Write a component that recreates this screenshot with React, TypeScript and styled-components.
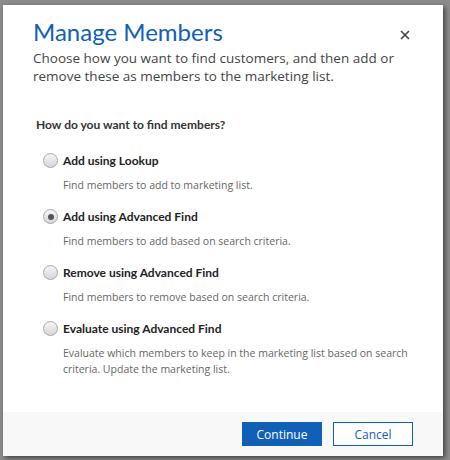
import styled, { createGlobalStyle } from "styled-components";

const GlobalStyle = createGlobalStyle`
  html, body {
    margin: 0;
    padding: 0;
    background: #8c8c8c;
  }
  body {
    font-family: "Open Sans", "Noto Sans", sans-serif;
  }
  * {
    box-sizing: border-box;
  }
`;

const Page = styled.div`
  width: 450px;
  height: 460px;
  padding: 5px 7px 4px 3px;
`;

const Dialog = styled.div`
  width: 440px;
  height: 451px;
  background: #fff;
  display: flex;
  flex-direction: column;
  box-shadow: 2px 2px 5px rgba(0, 0, 0, 0.55);
`;

const Header = styled.div`
  display: flex;
  align-items: flex-start;
  padding: 10px 30px 0 30px;
`;

const HeaderText = styled.div`
  flex: 1;
`;

const Title = styled.h1`
  margin: 0;
  font-family: Lato, "Open Sans", sans-serif;
  font-size: 24px;
  font-weight: 400;
  color: #1160b7;
  line-height: 34px;
`;

const Subtitle = styled.p`
  margin: 0;
  font-size: 13.5px;
  line-height: 18px;
  color: #444;
`;

const Close = styled.button`
  border: none;
  background: none;
  padding: 0;
  margin: 10px -2px 0 0;
  width: 20px;
  height: 20px;
  display: flex;
  align-items: center;
  justify-content: center;
  cursor: pointer;
`;

const Body = styled.div`
  flex: 1;
  padding: 32px 33px 0 33px;
`;

const Question = styled.div`
  font-family: Lato, "Open Sans", sans-serif;
  font-size: 12px;
  font-weight: 700;
  color: #333;
  margin-bottom: 21px;
`;

const Options = styled.div`
  display: flex;
  flex-direction: column;
  gap: 16px;
  padding-left: 7px;
`;

const Option = styled.label`
  display: grid;
  grid-template-columns: 16px 1fr;
  column-gap: 4px;
  row-gap: 9px;
  align-items: center;
`;

const Radio = styled.span<{ $checked?: boolean }>`
  width: 15px;
  height: 15px;
  border-radius: 50%;
  border: 1px solid #a8a8a8;
  background: linear-gradient(#f6f6f6, #d6d6d6);
  display: flex;
  align-items: center;
  justify-content: center;
  &::after {
    content: "";
    width: 6px;
    height: 6px;
    border-radius: 50%;
    background: #555;
    display: ${(p) => (p.$checked ? "block" : "none")};
  }
`;

const OptionLabel = styled.span`
  font-family: Lato, "Open Sans", sans-serif;
  font-size: 12px;
  font-weight: 700;
  color: #222;
`;

const OptionDesc = styled.span`
  grid-column: 2;
  font-size: 10.5px;
  line-height: 16px;
  color: #666;
`;

const Footer = styled.div`
  height: 44px;
  background: #f8f8f8;
  display: flex;
  justify-content: flex-end;
  align-items: center;
  gap: 11px;
  padding: 0 30px 0 0;
`;

const Button = styled.button<{ $primary?: boolean }>`
  width: 80px;
  height: 24px;
  font-family: "Open Sans", sans-serif;
  font-size: 12px;
  border: 1px solid #1160b7;
  background: ${(p) => (p.$primary ? "#1160b7" : "#fff")};
  color: ${(p) => (p.$primary ? "#fff" : "#1160b7")};
  padding: 0;
  cursor: pointer;
`;

const options = [
  { label: "Add using Lookup", desc: "Find members to add to marketing list." },
  { label: "Add using Advanced Find", desc: "Find members to add based on search criteria.", checked: true },
  { label: "Remove using Advanced Find", desc: "Find members to remove based on search criteria." },
  {
    label: "Evaluate using Advanced Find",
    desc: "Evaluate which members to keep in the marketing list based on search criteria. Update the marketing list.",
  },
];

export default function App() {
  return (
    <>
      <GlobalStyle />
      <Page>
        <Dialog>
          <Header>
            <HeaderText>
              <Title>Manage Members</Title>
              <Subtitle>
                Choose how you want to find customers, and then add or remove these as members to the marketing list.
              </Subtitle>
            </HeaderText>
            <Close aria-label="Close">
              <svg width="10" height="10" viewBox="0 0 10 10">
                <path d="M1 1L9 9M9 1L1 9" stroke="#444" strokeWidth="1.6" />
              </svg>
            </Close>
          </Header>
          <Body>
            <Question>How do you want to find members?</Question>
            <Options>
              {options.map((o) => (
                <Option key={o.label}>
                  <Radio $checked={o.checked} />
                  <OptionLabel>{o.label}</OptionLabel>
                  <OptionDesc>{o.desc}</OptionDesc>
                </Option>
              ))}
            </Options>
          </Body>
          <Footer>
            <Button $primary>Continue</Button>
            <Button>Cancel</Button>
          </Footer>
        </Dialog>
      </Page>
    </>
  );
}
